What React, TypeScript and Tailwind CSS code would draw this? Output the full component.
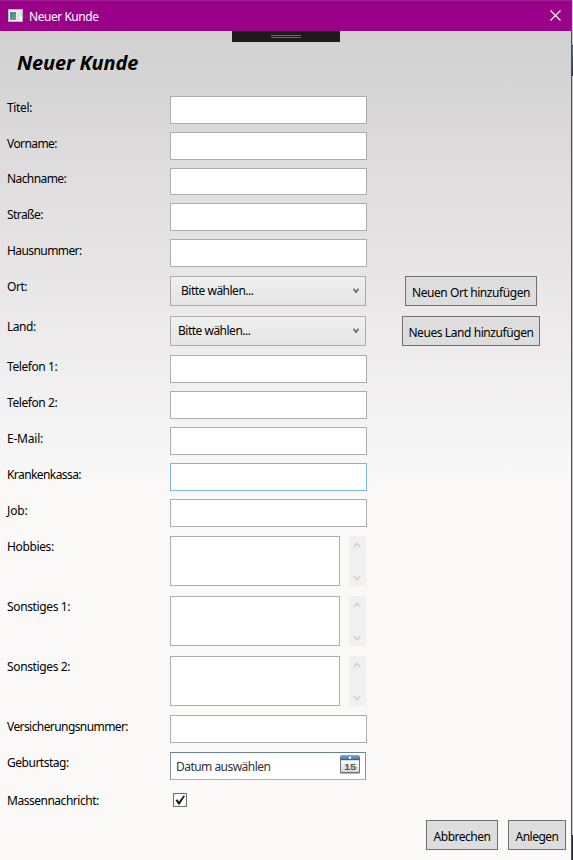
import React from 'react';

function Label({ className, children }: { className: string; children: React.ReactNode }) {
  return <div className={`w-[163px] shrink-0 whitespace-nowrap leading-4 ${className}`}>{children}</div>;
}

function TextRow({ label, row, box = 'h-7 border-[#abadb3]', text = 'pt-1 tracking-[-0.58px]' }: { label: string; row: string; box?: string; text?: string }) {
  return (
    <div className={`flex items-start ${row}`}>
      <Label className={text}>{label}</Label>
      <input className={`block w-[197px] border bg-white outline-none ${box}`} />
    </div>
  );
}

function ComboRow({ label, row, pad, button, gap }: { label: string; row: string; pad: string; button: string; gap: string }) {
  return (
    <div className={`flex items-start ${row}`}>
      <Label className="pt-[3px] tracking-[-0.45px]">{label}</Label>
      <div className={`flex h-[30px] w-[196px] items-center justify-between border border-[#acacac] bg-linear-to-b from-[#f0f0f0] to-[#e5e5e5] pr-[6px] ${pad}`}>
        <span className="leading-4 tracking-[-0.5px]">Bitte wählen...</span>
        <svg width="6" height="6" viewBox="0 0 6 6" fill="none" stroke="#606060" strokeWidth="1.5"><path d="M.5 .8 L3 4.2 L5.5 .8" /></svg>
      </div>
      <Button className={`h-[30px] tracking-[-0.42px] ${gap}`}>{button}</Button>
    </div>
  );
}

function Button({ className, children }: { className: string; children: React.ReactNode }) {
  return <button className={`flex shrink-0 items-center justify-center whitespace-nowrap border border-[#707070] bg-[#dddddd] pt-[3px] leading-4 ${className}`}>{children}</button>;
}

function AreaRow({ label, row, text }: { label: string; row: string; text: string }) {
  return (
    <div className={`flex items-start ${row}`}>
      <Label className={text}>{label}</Label>
      <textarea className="block h-[50px] w-[170px] resize-none border border-[#abadb3] bg-white outline-none" />
      <div className="ml-[9px] flex h-[50px] w-[17px] flex-col items-center justify-between bg-[#f0f0f0] pb-[5px] pr-px pt-[6px]">
        <svg width="8" height="6" viewBox="0 0 8 6" fill="none" stroke="#d0d0d0" strokeWidth="1.6"><path d="M.7 5 L4 1.4 L7.3 5" /></svg>
        <svg width="8" height="6" viewBox="0 0 8 6" fill="none" stroke="#d0d0d0" strokeWidth="1.6"><path d="M.7 1 L4 4.6 L7.3 1" /></svg>
      </div>
    </div>
  );
}

function CalendarIcon() {
  return (
    <svg width="20" height="19" viewBox="0 0 20 19">
      <defs>
        <linearGradient id="page" x1="0" y1="0" x2="0" y2="1"><stop stopColor="#fff" /><stop offset="1" stopColor="#d2d5da" /></linearGradient>
        <linearGradient id="head" x1="0" y1="0" x2="0" y2="1"><stop stopColor="#78aad3" /><stop offset="1" stopColor="#437ba9" /></linearGradient>
      </defs>
      <rect x="0" y="1" width="20" height="17.5" rx="1" fill="#6b7480" />
      <rect x="1" y="5" width="18" height="12" fill="url(#page)" />
      <rect x="1" y="0" width="18" height="4.5" fill="url(#head)" />
      <rect x="0" y="4.3" width="20" height=".9" fill="#41566b" />
      <circle cx="10" cy="2.8" r="1.2" fill="#fff" />
      <text x="10" y="15.2" textAnchor="middle" textLength="12" lengthAdjust="spacingAndGlyphs" fontFamily="Liberation Sans, sans-serif" fontWeight="700" fontSize="9" fill="#5a5a5a">15</text>
    </svg>
  );
}

export default function App() {
  return (
    <div className="flex h-[860px] w-[573px] overflow-hidden font-['Noto_Sans','Open_Sans',sans-serif] text-[12px] text-black">
      <div className="flex w-[572px] flex-col border-r border-[#9b1b8d]">
        <header className="flex h-[31px] shrink-0 items-center border-t border-[#a01c91] bg-[#9b0089] pl-2 pr-[10px] text-white">
          <svg className="-mt-px" width="15" height="13" viewBox="0 0 15 13">
            <defs><linearGradient id="app" x1="0" y1="0" x2="1" y2="1"><stop stopColor="#407ba5" /><stop offset="1" stopColor="#69ad8c" /></linearGradient></defs>
            <rect width="15" height="13" fill="#b5bbb9" />
            <rect x="1" y="1" width="13" height="11" fill="#f2f2f2" />
            <rect x="2" y="3" width="6" height="8" fill="url(#app)" />
            <rect x="9" y="3" width="2" height="8" fill="#dedede" />
            <rect x="12" y="3" width="2" height="4" fill="#c9ddd5" />
          </svg>
          <span className="ml-[6px] flex-1 pt-px leading-4 tracking-[-0.46px]">Neuer Kunde</span>
          <svg className="-mt-px" width="11" height="11" viewBox="0 0 11 11" stroke="#fff" strokeWidth="1.1"><path d="M.5 .5 L10.5 10.5 M10.5 .5 L.5 10.5" /></svg>
        </header>
        <main className="flex flex-1 flex-col bg-[linear-gradient(#d1d1d1_0px,#dbd9da_100px,#e7e5e6_240px,#f8f7f7_430px,#faf9f8_465px)]">
          <div className="ml-[232px] flex h-[11px] w-[108px] shrink-0 flex-col items-center gap-px bg-[#1b1b1b] pt-1">
            <div className="h-px w-[30px] bg-[#686868]" />
            <div className="h-px w-[30px] bg-[#686868]" />
          </div>
          <h1 className="h-[54px] shrink-0 pl-[17px] pt-[7px] text-[20px] font-bold italic leading-7 tracking-[-0.12px]">Neuer Kunde</h1>
          <form className="flex flex-col pl-[7px] tracking-[-0.22px]">
            <TextRow label="Titel:" row="h-9" text="pt-1 tracking-[-0.35px]" />
            <TextRow label="Vorname:" row="h-9" />
            <TextRow label="Nachname:" row="h-[35px]" box="h-[27px] border-[#abadb3]" text="pt-[3px] tracking-[-0.58px]" />
            <TextRow label="Straße:" row="h-9" />
            <TextRow label="Hausnummer:" row="h-[37px]" />
            <ComboRow label="Ort:" row="h-10" pad="pl-[10px]" button="Neuen Ort hinzufügen" gap="ml-[39px] w-[132px]" />
            <ComboRow label="Land:" row="h-[39px]" pad="pl-[7px]" button="Neues Land hinzufügen" gap="ml-9 w-[138px]" />
            <TextRow label="Telefon 1:" row="h-9" text="pt-1 tracking-[-0.42px]" />
            <TextRow label="Telefon 2:" row="h-9" text="pt-1 tracking-[-0.42px]" />
            <TextRow label="E-Mail:" row="h-9" text="pt-1 tracking-[-0.22px]" />
            <TextRow label="Krankenkassa:" row="h-9" box="h-7 border-[#7eb4ea]" />
            <TextRow label="Job:" row="h-[37px]" text="pt-1 tracking-[-0.1px]" />
            <AreaRow label="Hobbies:" row="h-[60px]" text="pt-[3px] tracking-[-0.36px]" />
            <AreaRow label="Sonstiges 1:" row="h-[60px]" text="pt-[3px] tracking-[-0.36px]" />
            <AreaRow label="Sonstiges 2:" row="h-[59px]" text="pt-[3px] tracking-[-0.36px]" />
            <TextRow label="Versicherungsnummer:" row="h-[37px]" />
            <div className="flex h-[41px] items-start">
              <Label className="pt-[3px] tracking-[-0.48px]">Geburtstag:</Label>
              <div className="flex h-7 w-[196px] items-start justify-between border border-b-[#a7b3c1] border-l-[#8594a5] border-r-[#8594a5] border-t-[#6c7f94] bg-white pl-[5px] pr-[5px] pt-[2px] text-[#333]">
                <span className="pt-1 leading-4 tracking-[-0.53px]">Datum auswählen</span>
                <CalendarIcon />
              </div>
            </div>
            <div className="flex h-[27px] items-start">
              <Label className="tracking-[-0.48px]">Massennachricht:</Label>
              <div className="ml-[3px] h-[14px] w-[14px] border border-[#707070] bg-white">
                <svg width="12" height="12" viewBox="0 0 12 12"><path d="M1.5 6.2 L3.4 5.2 L5 7.6 L9.4 1.4 L11 2 L5.7 10.6 L4.2 10.6 Z" fill="#202020" /></svg>
              </div>
            </div>
          </form>
          <footer className="flex justify-end gap-[10px] pr-[5px] tracking-[-0.5px]">
            <Button className="h-[30px] w-[72px]">Abbrechen</Button>
            <Button className="h-[30px] w-[58px]">Anlegen</Button>
          </footer>
        </main>
      </div>
      <div className="flex w-px flex-col bg-[#c8c8cc]">
        <div className="mt-[45px] h-[31px] border-t border-[#20202a] bg-linear-to-b from-[#60708a] to-[#34343e]" />
        <div className="mt-auto h-[25px] bg-[#292b3c]" />
      </div>
    </div>
  );
}
